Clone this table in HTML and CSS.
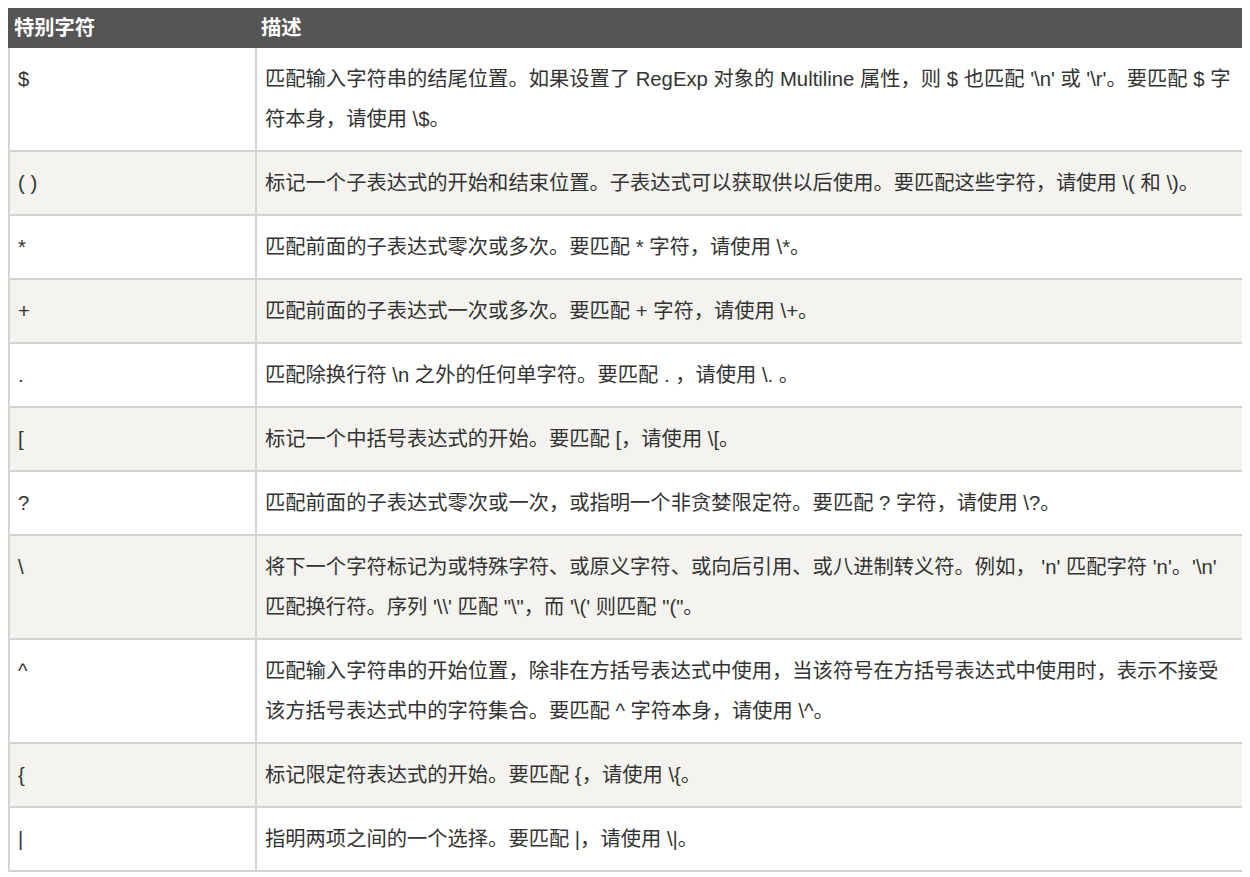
FILE: index.html
```html
<!DOCTYPE html>
<html lang="zh-CN">
<head>
<meta charset="utf-8">
<title>正则表达式 特别字符</title>
<link rel="stylesheet" href="styles.css">
</head>
<body>
<table class="reference">
  <thead>
    <tr>
      <th class="col-char">特别字符</th>
      <th class="col-desc">描述</th>
    </tr>
  </thead>
  <tbody>
    <tr>
      <td class="char">$</td>
      <td class="desc">匹配输入字符串的结尾位置。如果设置了 RegExp 对象的 Multiline 属性，则 $ 也匹配 '\n' 或 '\r'。要匹配 $ 字符本身，请使用 \$。</td>
    </tr>
    <tr>
      <td class="char">( )</td>
      <td class="desc">标记一个子表达式的开始和结束位置。子表达式可以获取供以后使用。要匹配这些字符，请使用 \( 和 \)。</td>
    </tr>
    <tr>
      <td class="char">*</td>
      <td class="desc">匹配前面的子表达式零次或多次。要匹配 * 字符，请使用 \*。</td>
    </tr>
    <tr>
      <td class="char">+</td>
      <td class="desc">匹配前面的子表达式一次或多次。要匹配 + 字符，请使用 \+。</td>
    </tr>
    <tr>
      <td class="char">.</td>
      <td class="desc">匹配除换行符 \n 之外的任何单字符。要匹配 . ，请使用 \. 。</td>
    </tr>
    <tr>
      <td class="char">[</td>
      <td class="desc">标记一个中括号表达式的开始。要匹配 [，请使用 \[。</td>
    </tr>
    <tr>
      <td class="char">?</td>
      <td class="desc">匹配前面的子表达式零次或一次，或指明一个非贪婪限定符。要匹配 ? 字符，请使用 \?。</td>
    </tr>
    <tr>
      <td class="char">\</td>
      <td class="desc">将下一个字符标记为或特殊字符、或原义字符、或向后引用、或八进制转义符。例如， 'n' 匹配字符 'n'。'\n' 匹配换行符。序列 '\\' 匹配 "\"，而 '\(' 则匹配 "("。</td>
    </tr>
    <tr>
      <td class="char">^</td>
      <td class="desc">匹配输入字符串的开始位置，除非在方括号表达式中使用，当该符号在方括号表达式中使用时，表示不接受该方括号表达式中的字符集合。要匹配 ^ 字符本身，请使用 \^。</td>
    </tr>
    <tr>
      <td class="char">{</td>
      <td class="desc">标记限定符表达式的开始。要匹配 {，请使用 \{。</td>
    </tr>
    <tr>
      <td class="char">|</td>
      <td class="desc">指明两项之间的一个选择。要匹配 |，请使用 \|。</td>
    </tr>
  </tbody>
</table>
</body>
</html>
```
FILE: styles.css
```css
* {
  box-sizing: border-box;
}

body {
  margin: 8px;
  background: #ffffff;
  font-family: "Liberation Sans", "Noto Sans CJK SC", sans-serif;
  font-size: 20.3px;
  color: #333333;
}

.reference {
  border-collapse: separate;
  border-spacing: 0;
  width: 1236px;
  table-layout: fixed;
}

.reference th {
  background: #555555;
  color: #ffffff;
  font-weight: bold;
  text-align: left;
  line-height: 31px;
  padding: 5px 6px 4px 6px;
  vertical-align: top;
}

.reference .col-char {
  width: 247px;
}

.reference td {
  line-height: 40px;
  padding: 11px 8px;
  vertical-align: top;
  border-left: 2px solid #d4d4d4;
  border-bottom: 2px solid #d4d4d4;
}

.reference td.desc {
  padding-right: 6px;
  border-right: 2px solid #d4d4d4;
}

.reference tbody tr:nth-child(odd) {
  background: #ffffff;
}

.reference tbody tr:nth-child(even) {
  background: #f4f3ef;
}
```
